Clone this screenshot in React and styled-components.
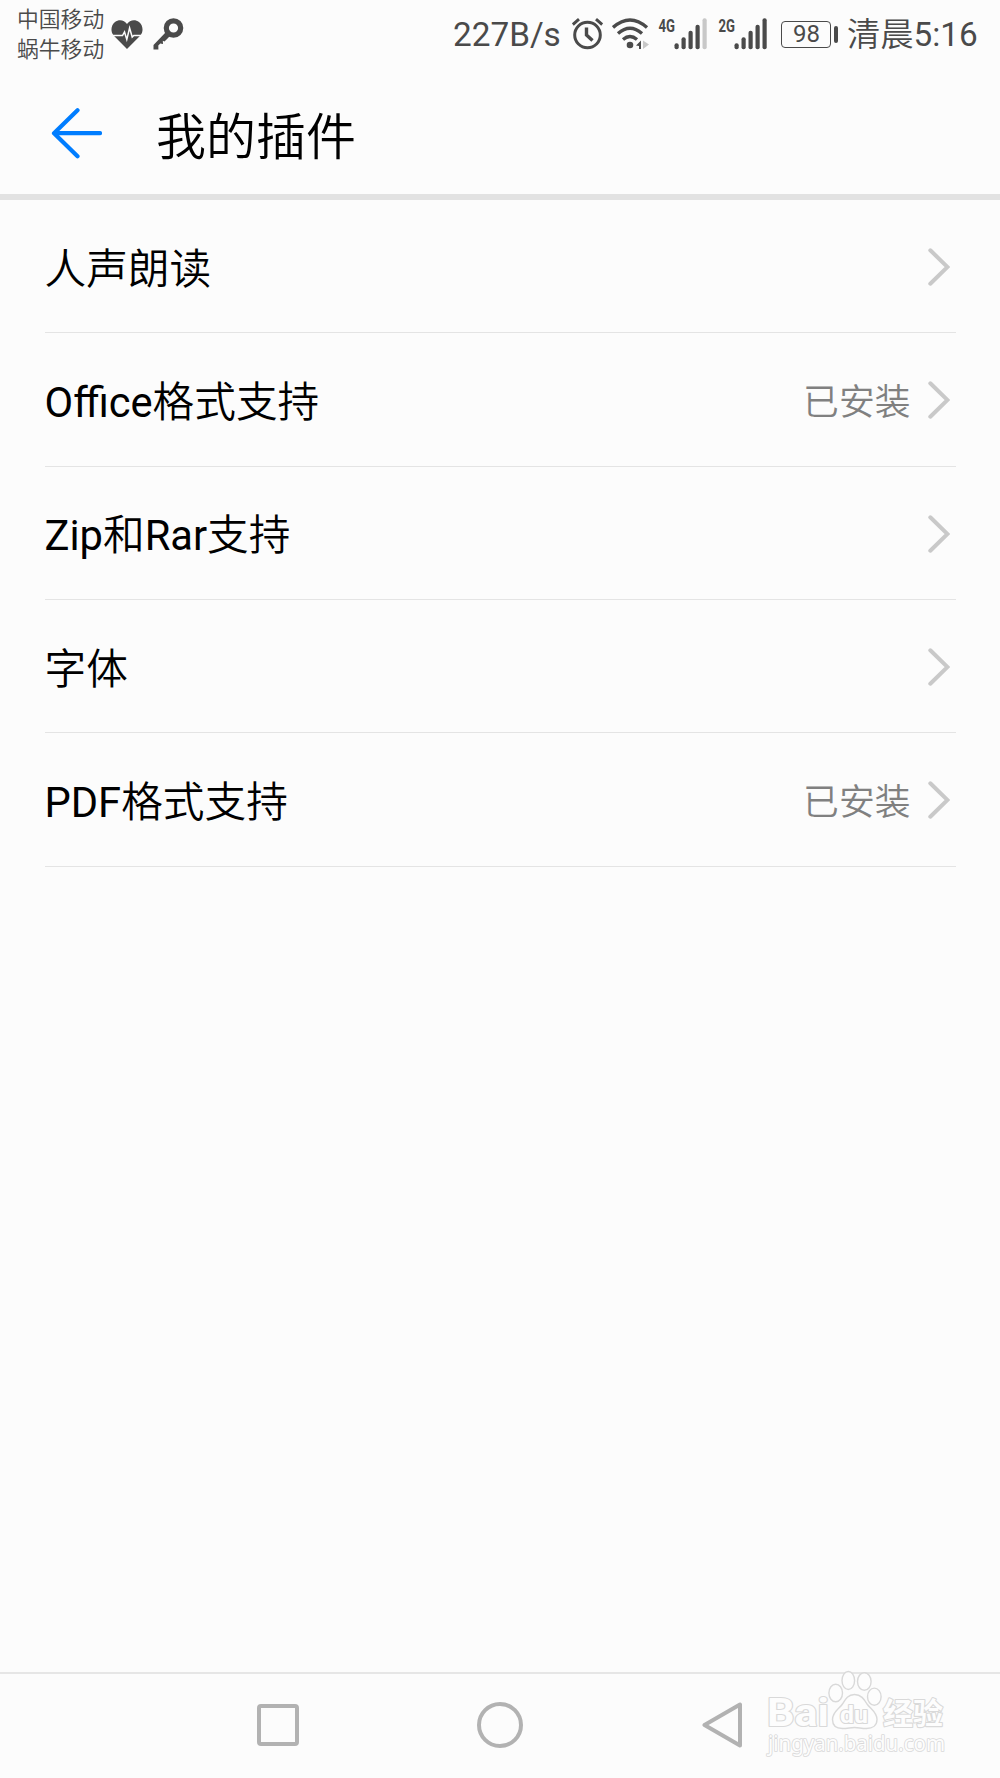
import React from 'react';
import styled, { createGlobalStyle } from 'styled-components';

const GlobalStyle = createGlobalStyle`
  * {
    box-sizing: border-box;
  }
  body {
    margin: 0;
    background: #fcfcfc;
    font-family: Roboto, 'Noto Sans CJK SC', sans-serif;
  }
  svg {
    display: block;
    flex: none;
  }
`;

const Screen = styled.div`
  position: relative;
  display: flex;
  flex-direction: column;
  width: 1000px;
  height: 1778px;
  overflow: hidden;
  background: #fcfcfc;
  color: #000;
`;

const StatusBar = styled.div`
  display: flex;
  justify-content: space-between;
  height: 68px;
  padding: 0 22px 0 17px;
  color: #4a4a4a;
`;

const StatusGroup = styled.div`
  display: flex;
  align-items: center;
`;

const Spacer = styled.div`
  flex: none;
  width: ${props => props.$width}px;
`;

const Carriers = styled.div`
  width: 93.5px;
  padding-top: 2px;
  font-size: 21.8px;
  line-height: 30px;
  font-weight: 350;
  white-space: nowrap;
`;

const StatusText = styled.span`
  width: ${props => props.$width}px;
  margin-right: ${props => props.$gap || 0}px;
  padding-top: 2px;
  font-size: 33.3px;
  line-height: 40px;
  white-space: nowrap;
`;

const Clock = styled(StatusText)`
  font-weight: 350;

  span {
    font-weight: 400;
  }
`;

const Battery = styled.div`
  display: flex;
  align-items: center;
  margin-right: 9.5px;
`;

const BatteryBody = styled.div`
  width: 50px;
  height: 27px;
  border: 1.6px solid #4a4a4a;
  border-radius: 4px;
  font-size: 24px;
  line-height: 25px;
  text-align: center;
  padding-left: 2px;
`;

const BatteryCap = styled.div`
  width: 4px;
  height: 17px;
  margin-left: 3px;
  border-radius: 2px;
  background: #4a4a4a;
`;

const Header = styled.header`
  display: flex;
  align-items: center;
  height: 132px;
  padding: 4px 0 0 50px;
  border-bottom: 6px solid #e2e2e2;
`;

const Title = styled.h1`
  margin: 0 0 0 54px;
  padding-top: 10px;
  font-size: 50px;
  line-height: 60px;
  font-weight: 350;
`;

const List = styled.ul`
  flex: 1;
  margin: 0;
  padding: 0 44.5px;
  list-style: none;
`;

const Row = styled.li`
  display: flex;
  align-items: center;
  height: 133.33px;
  padding: 2px 6px 0 0;
  border-bottom: 1.5px solid #e4e4e4;
`;

const Label = styled.span`
  flex: 1;
  padding-top: 5px;
  font-size: 41.67px;
  line-height: 60px;
  font-weight: 350;
`;

const Latin = styled.span`
  font-weight: 400;
`;

const State = styled.span`
  margin-right: 17px;
  padding-top: 6px;
  font-size: 35.8px;
  line-height: 50px;
  font-weight: 350;
  color: #808080;
`;

const NavBar = styled.nav`
  display: flex;
  align-items: center;
  justify-content: space-between;
  height: 106px;
  padding: 0 257px 2px;
  border-top: 2px solid #e6e6e6;
`;

const Watermark = styled.svg`
  position: absolute;
  left: 760px;
  top: 1666px;
`;

const Outlined = styled.g`
  paint-order: stroke;
  stroke-linejoin: round;
`;

const plugins = [
  { name: '人声朗读' },
  { name: 'Office格式支持', installed: true },
  { name: 'Zip和Rar支持' },
  { name: '字体' },
  { name: 'PDF格式支持', installed: true },
];

const HeartIcon = () => (
  <svg width="32" height="29" viewBox="0 0 32 29">
    <path d="M16 29 2.6 15.4C-.8 11.5 0 5 4 1.9 8-1 13.5 0 16 4 18.5 0 24-1 28 1.9c4 3.1 4.800 9.600 1.400 13.500z" fill="#4a4a4a" />
    <path d="M0 15.500h11.500l2-3.500 2.300 7.500 2.800-11.500 2.600 9 1.600-1.500H32" fill="none" stroke="#fcfcfc" strokeWidth="1.500" />
  </svg>
);

const KeyIcon = () => (
  <svg width="31" height="32" viewBox="0 0 31 32">
    <circle cx="20.500" cy="10" r="7.200" fill="none" stroke="#4a4a4a" strokeWidth="5.200" />
    <path d="M12.500 14.500 16.500 18.500 11.500 23.500 9.800 22.800 10 26 7.300 25.600 5.300 27.500 5.400 31.500H.5V27z" fill="#4a4a4a" />
  </svg>
);

const AlarmIcon = () => (
  <svg width="31" height="32" viewBox="0 0 31 32" fill="none" stroke="#4a4a4a" strokeWidth="3">
    <circle cx="15.500" cy="17" r="12.800" />
    <path d="M14.500 9.500v7.500l6 5.500" strokeWidth="3.400" />
    <path d="M.8 6.500 7 1.200M30.200 6.500 24 1.200" />
  </svg>
);

const WifiIcon = () => (
  <svg width="37" height="32" viewBox="0 0 37 32" fill="none" stroke="#4a4a4a" strokeWidth="3.400">
    <path d="M1 9.500Q18 -5.500 35 9.500M6 15.500Q18 5 30 15.500M11 21.500Q18 15.500 25 21.500" />
    <circle cx="18" cy="27" r="3.300" fill="#4a4a4a" stroke="none" />
    <path d="M29 22.500v8.500h-2v-3l-3-.5z" fill="#4a4a4a" stroke="none" />
    <path d="M31 22.500v8.500l6-4.500z" fill="#c8c8c8" stroke="none" />
  </svg>
);

const barHeights = [6, 12, 18.5, 24.5, 31];

const Signal = ({ type, level }) => (
  <svg width="50" height="42" viewBox="0 -5 50 42">
    <text x="0.500" y="14" fontSize="19" fontWeight="700" fill="#4a4a4a" textLength="16.500" lengthAdjust="spacingAndGlyphs">
      {type}
    </text>
    {barHeights.map((h, i) => (
      <rect key={h} x={16.5 + i * 7} y={31.3 - h} width="4.2" height={h} rx="2" fill={i < level ? '#4a4a4a' : '#c8c8c8'} />
    ))}
  </svg>
);

const BackArrow = () => (
  <svg width="52" height="52" viewBox="0 0 52 52" fill="none" stroke="#007dff" strokeWidth="4.200" strokeLinecap="round">
    <path d="M27.500 3.200 4 26.200l23.500 23M5 26.200h45" strokeLinejoin="round" />
  </svg>
);

const Chevron = () => (
  <svg width="22" height="38" viewBox="0 0 22 38" fill="none" stroke="#c9c9c9" strokeWidth="4" strokeLinecap="round">
    <path d="M2.300 2.300 19.500 19 2.300 35.700" />
  </svg>
);

const BaiduMark = () => (
  <Watermark width="200" height="96" viewBox="760 1666 200 96" fill="#fdfdfd" stroke="#d9d9d9" strokeWidth="1.400">
    <ellipse cx="835.700" cy="1693" rx="6.800" ry="8.800" />
    <ellipse cx="848.300" cy="1680.500" rx="6.300" ry="9" />
    <ellipse cx="864.300" cy="1681.500" rx="6.800" ry="8.800" />
    <ellipse cx="874.300" cy="1696.700" rx="6.800" ry="8.600" />
    <path d="M854.500 1694.500c6.500 0 9.500 4.500 12.500 9.500 3.500 5 10 8 10 15.500 0 6-4.500 9-10.500 9-5 0-8-1-12-1s-7 1-12 1c-6 0-10-3-10-9 0-7.500 6.500-10.500 10-15.500 3-5 5.500-9.500 12-9.500z" />
    <Outlined strokeWidth="2.200" fontWeight="700">
      <text x="767" y="1726" fontSize="39" textLength="62" lengthAdjust="spacingAndGlyphs">Bai</text>
      <text x="840" y="1722.500" fontSize="24" textLength="28" lengthAdjust="spacingAndGlyphs">du</text>
      <text x="883" y="1724" fontSize="30" fontFamily="Noto Sans CJK SC">经验</text>
      <text x="768" y="1750.500" fontSize="21" fontWeight="400" fontFamily="Noto Sans" strokeWidth="1.700" textLength="177" lengthAdjust="spacingAndGlyphs">
        jingyan.baidu.com
      </text>
    </Outlined>
  </Watermark>
);

// Latin runs are set one step heavier than the Chinese around them
const PluginName = ({ text }) =>
  text
    .split(/([A-Za-z]+)/)
    .filter(Boolean)
    .map((part, index) => (/[A-Za-z]/.test(part) ? <Latin key={index}>{part}</Latin> : part));

const App = () => (
  <Screen>
    <GlobalStyle />
    <StatusBar>
      <StatusGroup>
        <Carriers>
          <div>中国移动</div>
          <div>蜗牛移动</div>
        </Carriers>
        <HeartIcon />
        <Spacer $width={10} />
        <KeyIcon />
      </StatusGroup>
      <StatusGroup>
        <StatusText $width={107} $gap={12}>227B/s</StatusText>
        <AlarmIcon />
        <Spacer $width={9} />
        <WifiIcon />
        <Spacer $width={8.5} />
        <Signal type="4G" level={4} />
        <Spacer $width={10.5} />
        <Signal type="2G" level={5} />
        <Spacer $width={12.5} />
        <Battery>
          <BatteryBody>98</BatteryBody>
          <BatteryCap />
        </Battery>
        <Clock $width={131}>
          清晨<span>5:16</span>
        </Clock>
      </StatusGroup>
    </StatusBar>
    <Header>
      <BackArrow />
      <Title>我的插件</Title>
    </Header>
    <List>
      {plugins.map(plugin => (
        <Row key={plugin.name}>
          <Label>
            <PluginName text={plugin.name} />
          </Label>
          {plugin.installed && <State>已安装</State>}
          <Chevron />
        </Row>
      ))}
    </List>
    <NavBar>
      <svg width="42" height="42" viewBox="0 0 42 42" fill="none" stroke="#b2b2b2" strokeWidth="4">
        <rect x="2" y="2" width="38" height="38" rx="2" />
      </svg>
      <svg width="46" height="46" viewBox="0 0 46 46" fill="none" stroke="#b2b2b2" strokeWidth="4">
        <circle cx="23" cy="23" r="21" />
      </svg>
      <svg width="42" height="46" viewBox="0 0 42 46" fill="none" stroke="#b2b2b2" strokeWidth="4" strokeLinejoin="round">
        <path d="M39 2.500v41L3.500 23z" />
      </svg>
    </NavBar>
    <BaiduMark />
  </Screen>
);

export default App;
